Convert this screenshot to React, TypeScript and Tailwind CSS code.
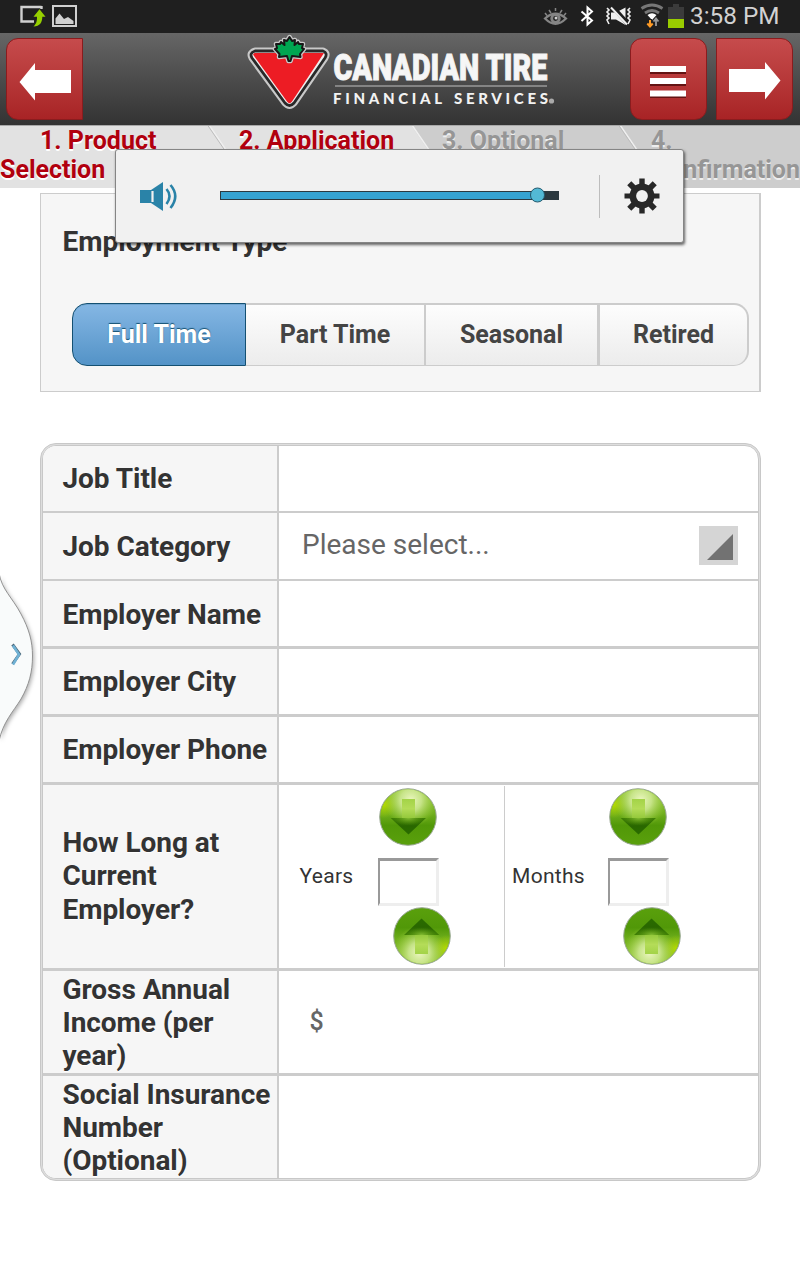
import type { ReactNode } from "react";

function StatusBar() {
  return (
    <div className="flex h-[33px] shrink-0 items-start justify-between bg-[#1f1f1f]">
      <svg width="100" height="33" viewBox="0 0 100 33" fill="none">
        <path d="M41.500 7H21.500V21.500H34M41.500 6V9" stroke="#d0d0d0" strokeWidth="2.400" />
        <path d="M39.500 9.300L45.500 16.700H42.300C42.300 22 40 26.500 33.500 26.500C36.500 23.500 37 21 37 16.700H33.500Z" fill="#96d000" />
        <rect x="53" y="6" width="23" height="20" stroke="#d0d0d0" strokeWidth="2" />
        <path d="M55.500 24V18.500L59.500 13.500L64 19L68 17L73.500 21V24Z" fill="#d0d0d0" />
      </svg>
      <div className="flex">
        <svg width="150" height="33" viewBox="540 0 150 33" fill="none">
          <g stroke="#858585" strokeWidth="1.500">
            <path d="M545 18.500Q555.500 9 566 18.500Q555.500 29 545 18.500Z" strokeWidth="2.200" />
            <circle cx="555.500" cy="18.500" r="3.800" strokeWidth="2.800" />
            <path d="M555.500 8V11M549 10L551 13M562 10L560 13M545 13L547 15.500M566 13L564 15.500" />
          </g>
          <circle cx="556" cy="18" r="1.500" fill="#d0d0d0" />
          <path d="M581.500 11.500L592 20.500L587.500 24.500V7.500L592 11.500L581.500 21" stroke="#fff" strokeWidth="2" />
          <path d="M611 12.500H616L625.500 7.500V25L616 19.500H611Z" fill="#f0f0f0" />
          <path d="M612 6L628 24" stroke="#1f1f1f" strokeWidth="4.500" />
          <path d="M611 7.500L627 24.500" stroke="#f0f0f0" strokeWidth="2" />
          <path d="M607 8L609 10L607 12L609 14L607 16L609 18L607 20L609 24M630 8L628 10L630 12L628 14L630 16L628 18L630 20L628 24" stroke="#f0f0f0" strokeWidth="1.600" />
          <path d="M641.500 8.500Q652 1.500 662.500 8.500M645 13Q652 8 659 13" stroke="#777" strokeWidth="2.800" />
          <path d="M647.500 15Q652 11.500 656.500 15L652 20Z" fill="#fff" />
          <path d="M650 19V26M647.300 23.500L650 26.500L652.700 23.500" stroke="#1f1f1f" strokeWidth="4" />
          <path d="M650 20V26M647.300 23.500L650 26.500L652.700 23.500" stroke="#ff9b25" strokeWidth="2" />
          <path d="M656 26V19M653.500 21.500L656 18.500L658.500 21.500" stroke="#999" strokeWidth="1.800" />
          <path d="M668 7H673V4H679V7H684V19H668Z" fill="#3b3b3b" />
          <rect x="668" y="19" width="16" height="9" fill="#99cc00" />
        </svg>
        <span className="w-[110px] whitespace-nowrap text-[24.3px] leading-[32px] text-[#d2d2d2]">3:58 PM</span>
      </div>
    </div>
  );
}

function Logo() {
  const triangle = "M255 51H323Q328 53 325 58L294 103Q289.500 108 285 103L252 58Q249 53 255 51Z";
  const leaf = "M289.500 37L292 41L295 40L294.500 45L298 42L299 44H303L302 48L304 49L300 54L300.500 57L292 56L290.500 61H288.500L287 56L279 57L279.500 54L275 49L277 48L276 44H280L281 42L284.500 45L284 40L287 41Z";
  return (
    <svg className="ml-[163px] mt-px" width="312" height="80" viewBox="246 34 312 80">
      <g strokeLinejoin="round">
        <path d={triangle} fill="#262626" stroke="#c9c9c9" strokeWidth="7" />
        <path d={triangle} fill="#eee" stroke="#292929" strokeWidth="2.800" />
        <path d="M254.500 53H324L292 101.500Q289.500 105 287 101.500L253 54.500Z" fill="#ed1c24" />
        <path d={leaf} fill="#00a651" stroke="#c9c9c9" strokeWidth="4.500" />
        <path d={leaf} fill="#00a651" stroke="#171717" strokeWidth="2" />
      </g>
      <text transform="translate(333.500 79.500) scale(0.777 1)" fill="#f6f6f6" stroke="#f4f4f4" strokeWidth="1" fontFamily="Roboto, sans-serif" fontWeight="900" fontSize="37">CANADIAN TIRE</text>
      <path d="M335 86H547" stroke="#999" strokeWidth="1.500" />
      <g fill="#f2f2f2" fontFamily="Lato, sans-serif" fontWeight="900" fontSize="15">
        <text x="333" y="103.500" textLength="109">FINANCIAL</text>
        <text x="454" y="103.500" textLength="94">SERVICES</text>
      </g>
      <circle cx="551.500" cy="101" r="2.600" fill="#aaa" />
    </svg>
  );
}

function Header() {
  const button = "flex h-[82px] w-[77px] items-center justify-center border border-[#8a1c1e] bg-linear-to-b from-[#c64b4c] to-[#a82325]";
  return (
    <header className="flex h-[92px] shrink-0 items-start bg-linear-to-b from-[#666] to-[#333] pl-1.5">
      <button className={`mt-[5px] rounded-l-xl pt-1.5 ${button}`}>
        <svg width="52" height="40" viewBox="0 0 52 40"><path d="M0.500 20L16 1V8H52V31H16V38.500Z" fill="#fff" /></svg>
      </button>
      <Logo />
      <button className={`ml-[72px] mt-[5px] rounded-xl pt-1.5 pr-0.5 ${button}`}>
        <svg width="38" height="34" viewBox="0 0 38 34">
          <path d="M1 2H37V7H1ZM1 14H37V19H1ZM1 26H37V31H1Z" fill="#641313" transform="translate(0 2)" />
          <path d="M1 1H37V7H1ZM1 13H37V19H1ZM1 25.500H37V31.500H1Z" fill="#fff" />
        </svg>
      </button>
      <button className={`ml-[9px] mt-[5px] rounded-r-xl pt-1 ${button}`}>
        <svg width="52" height="40" viewBox="0 0 52 40"><path d="M51.500 19.500L36 1V8H0V31H36V38.500Z" fill="#fff" /></svg>
      </button>
    </header>
  );
}

function Steps() {
  return (
    <nav className="relative flex h-[63px] shrink-0 overflow-hidden bg-[#cdcdcd] text-[25px] font-bold leading-[29px]">
      <svg className="absolute inset-0" width="800" height="63" viewBox="0 0 800 63">
        <path d="M0 0H411L454 63H0Z" fill="#e2e2e2" />
        <path d="M209 0L252 63M412 0L455 63M620 0L663 63" stroke="#efefef" strokeWidth="1.500" />
        <path d="M207.500 0L250.500 63M618.500 0L661.500 63" stroke="#bdbdbd" />
        <path d="M0 0.500H800" stroke="#a9a9a9" />
      </svg>
      <div className="relative w-[207px] pt-px text-[#b1000e] [text-shadow:0_2px_0_#fff]">
        <div className="pl-10">1. Product</div>
        <div>Selection</div>
      </div>
      <div className="relative w-[235px] pl-8 pt-px text-[#b1000e] [text-shadow:0_2px_0_#fff]">2. Application</div>
      <div className="relative w-[203px] pt-px text-[#969696] [text-shadow:0_2px_0_#eee]">3. Optional</div>
      <div className="relative flex w-[155px] flex-col pt-px text-[#969696] [text-shadow:0_2px_0_#eee]">
        <div className="pl-[6px]">4.</div>
        <div className="self-end whitespace-nowrap">Confirmation</div>
      </div>
    </nav>
  );
}

function EmploymentType() {
  const item = "flex h-full items-center justify-center";
  return (
    <section className="ml-10 mt-[5px] h-[199px] w-[721px] shrink-0 border border-r-2 border-[#ccc] bg-[#f6f6f6]">
      <h2 className="pl-[21.5px] pt-[31px] text-[28px] font-bold leading-[33px] text-[#333]">Employment Type</h2>
      <div className="ml-[31px] mt-[45px] flex h-[63px] w-[677px] text-[25px] font-bold text-[#444] [text-shadow:0_1px_0_#fff]">
        <button className={`${item} w-[174px] rounded-l-[15px] border border-[#145072] bg-linear-to-b from-[#85b7e4] to-[#5393c7] text-white shadow-[inset_0_1px_0_#6fa4cf] [text-shadow:0_-1px_1px_#145072]`}>Full Time</button>
        <button className={`${item} w-[180px] border-b border-r-2 border-t-2 border-[#ccc] bg-linear-to-b from-[#fdfdfd] to-[#ececec]`}>Part Time</button>
        <button className={`${item} w-[174px] border-b border-r-[3px] border-t-2 border-[#ccc] bg-linear-to-b from-[#fdfdfd] to-[#ececec]`}>Seasonal</button>
        <button className={`${item} w-[149px] rounded-r-[15px] border-b border-r-2 border-t-2 border-[#ccc] bg-linear-to-b from-[#fdfdfd] to-[#ececec]`}>Retired</button>
      </div>
    </section>
  );
}

function Arrow({ up = false }: { up?: boolean }) {
  const id = up ? "up" : "down";
  return (
    <svg width="60" height="60" viewBox="0 0 60 60" className={up ? "ml-[13.5px] rotate-180" : ""}>
      <defs>
        <linearGradient id={`${id}-ball`} x1="0" y1="0" x2="0" y2="1">
          <stop offset="0" stopColor="#93c43a" />
          <stop offset="0.450" stopColor="#6fae1c" />
          <stop offset="0.650" stopColor="#519808" />
          <stop offset="1" stopColor="#5aa00c" />
        </linearGradient>
        <radialGradient id={`${id}-shine`} cx="0.550" cy="0.200" r="0.480">
          <stop offset="0" stopColor="#edf7c2" />
          <stop offset="0.400" stopColor="#d2eb98" stopOpacity="0.850" />
          <stop offset="1" stopColor="#a6d63c" stopOpacity="0" />
        </radialGradient>
        <radialGradient id={`${id}-edge`} cx="0.060" cy="0.270" r="0.250">
          <stop offset="0" stopColor="#b7dc00" />
          <stop offset="1" stopColor="#a5cf00" stopOpacity="0" />
        </radialGradient>
        <linearGradient id={`${id}-head`} x1="0" y1="0" x2="0" y2="1">
          <stop offset="0" stopColor="#408006" />
          <stop offset="0.500" stopColor="#296700" />
          <stop offset="1" stopColor="#2a6c00" />
        </linearGradient>
        <radialGradient id={`${id}-glow`} cx="0.500" cy="0" r="0.450">
          <stop offset="0" stopColor="#83bb32" />
          <stop offset="1" stopColor="#5d9c10" stopOpacity="0" />
        </radialGradient>
        <linearGradient id={`${id}-stem`} x1="0" y1="0" x2="0" y2="1">
          <stop offset="0" stopColor="#a3d347" />
          <stop offset="0.500" stopColor="#b4dc58" />
          <stop offset="1" stopColor="#95c93c" />
        </linearGradient>
      </defs>
      <circle cx="30" cy="30" r="28.300" fill={`url(#${id}-ball)`} stroke="#9aa895" strokeWidth="1" />
      <circle cx="30" cy="30" r="27.700" fill={`url(#${id}-edge)`} />
      <circle cx="30" cy="30" r="27.700" fill={`url(#${id}-shine)`} />
      <path d="M12.700 31H48L30.500 47.500Z" fill={`url(#${id}-head)`} />
      <path d="M12.700 31H48L30.500 47.500Z" fill={`url(#${id}-glow)`} />
      <path d="M24 12H37V31H24Z" fill={`url(#${id}-stem)`} />
    </svg>
  );
}

function Stepper({ label, className, labelClass }: { label: string; className: string; labelClass: string }) {
  return (
    <div className={`flex h-[181px] ${className}`}>
      <div className={`shrink-0 pt-[76px] text-[21px] leading-[28px] tracking-[0.3px] text-[#333] ${labelClass}`}>{label}</div>
      <div className="flex flex-col pt-px">
        <Arrow />
        <div className="mt-[11px] h-12 w-[61px] border-b-[3px] border-l-2 border-r-[3px] border-t-[3px] border-b-[#eee] border-l-[#999] border-r-[#eee] border-t-[#999] bg-white" />
        <Arrow up />
      </div>
    </div>
  );
}

function Row({ label, className, labelClass = "", children }: { label: string; className: string; labelClass?: string; children?: ReactNode }) {
  return (
    <div className={`flex border-[#ccc] ${className}`}>
      <div className="flex w-[236px] shrink-0 items-center border-r-2 border-[#ccc] bg-[#f6f6f6] pl-[19.5px] text-[28px] font-bold leading-[33px] tracking-[-0.05px] text-[#333] [text-shadow:0_1px_0_#fff]">
        <span className={`whitespace-pre ${labelClass}`}>{label}</span>
      </div>
      <div className="flex grow items-center">{children}</div>
    </div>
  );
}

function JobForm() {
  return (
    <section className="ml-10 mt-[51px] w-[721px] shrink-0 rounded-[16px] border border-[#c8c8c8] bg-[#dedede] p-px">
      <div className="overflow-hidden rounded-[14px] border border-[#c8c8c8] bg-white">
        <Row label="Job Title" className="h-[67px] border-b-2" />
        <Row label="Job Category" className="h-[68px] border-b-2">
          <span className="grow pb-1 pl-[23px] text-[28px] leading-[33px] text-[#666]">Please select...</span>
          <svg className="mb-0.5 mr-5" width="39" height="39" viewBox="0 0 39 39">
            <rect width="39" height="39" fill="#d5d5d5" />
            <path d="M8 34L34 8V34Z" fill="#727272" />
          </svg>
        </Row>
        <Row label="Employer Name" className="h-[68px] border-b-[3px]" labelClass="pt-px" />
        <Row label="Employer City" className="h-[68px] border-b-[3px]" />
        <Row label="Employer Phone" className="h-[68px] border-b-[3px]" />
        <Row label={"How Long at\nCurrent\nEmployer?"} className="h-[186px] border-b-[3px]" labelClass="pb-px leading-[33.4px]">
          <Stepper label="Years" className="w-[226px] border-r border-[#ccc]" labelClass="w-[99px] pl-[20.5px]" />
          <Stepper label="Months" className="w-[253px]" labelClass="w-[103px] pl-[7px]" />
        </Row>
        <Row label={"Gross Annual\nIncome (per\nyear)"} className="h-[105px] border-b-[3px]">
          <span className="pl-[30.5px] text-[25px] font-medium text-[#666]">$</span>
        </Row>
        <Row label={"Social Insurance\nNumber\n(Optional)"} className="h-[102px]" />
      </div>
    </section>
  );
}

function SideHandle() {
  return (
    <svg className="absolute left-0 top-[565px] drop-shadow-[1px_2px_2px_#0005]" width="40" height="190" viewBox="0 565 40 190">
      <path d="M-1 573C2 590 12 597 21 614C29 629 32.500 641 32.500 656C32.500 672 29 685 21 699C13 712 3 722 -1 741Z" fill="#f9fbfb" stroke="#929292" />
      <path d="M12.500 644.500L19.500 654L12.500 664" fill="none" stroke="#4b6677" strokeWidth="3" />
      <path d="M13 645.500L19 654.500L13 664.500" fill="none" stroke="#70b1d4" strokeWidth="2.600" />
    </svg>
  );
}

function VolumePanel() {
  return (
    <div className="absolute left-[115px] top-[149px] flex h-[94px] w-[569px] items-center rounded-[3px] border border-[#858585] bg-[#f1f1f1] shadow-[1px_2px_3px_#0009]">
      <svg className="ml-6" width="40" height="30" viewBox="140 181 40 30" fill="none">
        <path d="M140 190H151L163 182V211L151 203H140Z" fill="#2a83a8" />
        <path d="M152.500 191V202" stroke="#f1f1f1" strokeWidth="2.200" />
        <path d="M166.500 189Q172.500 196 166.500 204M170.500 185Q180 196 170.500 208" stroke="#2a83a8" strokeWidth="2.600" />
      </svg>
      <svg className="ml-10" width="340" height="20" viewBox="220 186 340 20">
        <rect x="220" y="191" width="339" height="9" fill="#2c3940" />
        <rect x="221" y="192" width="316" height="7" fill="#36a3d2" />
        <circle cx="537.500" cy="195" r="7" fill="#53b9d5" stroke="#24596d" />
      </svg>
      <div className="ml-[39px] h-[43px] w-px bg-[#bdbdbd]" />
      <svg className="ml-[22.5px]" width="38" height="38" viewBox="-19 -19 38 38" fill="#282828">
        <path d="M-2.700 -17.500H2.700V17.500H-2.700ZM-17.500 -2.600V2.600H17.500V-2.600Z" />
        <path d="M-2.900 -18H2.900V18H-2.900ZM-18 -2.900V2.900H18V-2.900Z" transform="rotate(45)" />
        <circle r="12.500" />
        <circle r="5.900" fill="#f1f1f1" />
      </svg>
    </div>
  );
}

export default function App() {
  return (
    <div className="relative flex h-[1280px] w-[800px] flex-col overflow-hidden bg-white font-[Roboto,sans-serif]">
      <StatusBar />
      <Header />
      <Steps />
      <EmploymentType />
      <JobForm />
      <SideHandle />
      <VolumePanel />
    </div>
  );
}
